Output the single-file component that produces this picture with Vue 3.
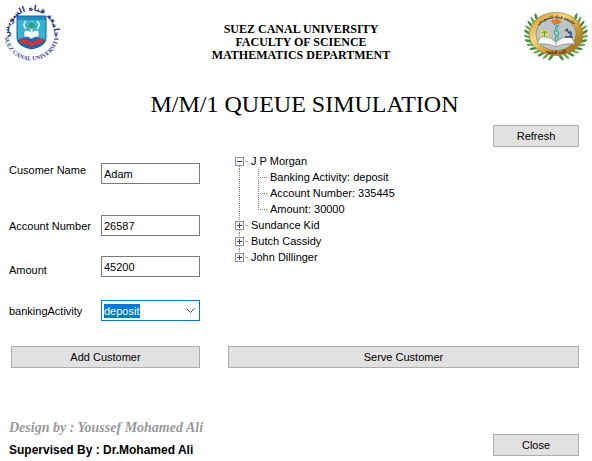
<script setup>
import { ref, reactive } from 'vue'

const form = reactive({ name: 'Adam', account: '26587', amount: '45200', activity: 'deposit' })

const customers = ref([
  { name: 'J P Morgan', activity: 'deposit', account: '335445', amount: '30000', open: true },
  { name: 'Sundance Kid', activity: 'deposit', account: '335446', amount: '12000', open: false },
  { name: 'Butch Cassidy', activity: 'withdraw', account: '335447', amount: '8000', open: false },
  { name: 'John Dillinger', activity: 'deposit', account: '335448', amount: '5000', open: false }
])

function details(c) {
  return ['Banking Activity: ' + c.activity, 'Account Number: ' + c.account, 'Amount: ' + c.amount]
}

function addCustomer() {
  customers.value.push({ ...form, open: false })
}

function serveCustomer() {
  customers.value.shift()
}

// Laurel leaves placed in pairs along both sides of the seal.
const leaves = []
for (let i = 0; i < 13; i++) {
  const deg = 80 - i * 10.5
  const a = (deg * Math.PI) / 180
  for (const side of [1, -1]) {
    const x = 36 + side * 28.5 * Math.cos(a)
    const y = 34 + 23.5 * Math.sin(a)
    leaves.push({ x, y, r: side === 1 ? deg - 28 : 208 - deg })
  }
}
</script>

<template>
  <main class="window">
    <header class="header">
      <svg class="logo-left" viewBox="0 0 64 64" role="img" aria-label="Suez Canal University logo">
        <defs>
          <path id="arc-top" d="M9.500 38 A22.500 22.500 0 1 1 53.500 38" />
          <path id="arc-bottom" d="M4 33 A27.500 27.500 0 0 0 59 33" />
          <clipPath id="shield"><path d="M17 16 H46 V38 Q46 46 31.500 49 Q17 46 17 38 Z" /></clipPath>
        </defs>
        <text class="arabic" direction="rtl"><textPath href="#arc-top" startOffset="50%" text-anchor="middle">جامعة قناة السويس</textPath></text>
        <text class="latin"><textPath href="#arc-bottom" startOffset="50%" text-anchor="middle">SUEZ CANAL UNIVERSITY</textPath></text>
        <g clip-path="url(#shield)">
          <rect x="17" y="16" width="29" height="34" fill="#36b4d6" />
          <rect x="17" y="16" width="29" height="4" fill="#1e8fc0" />
          <path d="M17 40 Q31 33 46 40 V50 H17Z" fill="#2468a5" />
          <path d="M20 38 L31.500 42 L43 38 V42 L31.500 46 L20 42Z" fill="#d5323a" />
        </g>
        <path d="M24 31 Q28 29 31.500 32 Q35 29 39 31 V37 Q35 36 31.500 39 Q28 36 24 37Z" fill="#f4fbfc" stroke="#4b7d95" stroke-width=".6" />
        <path d="M31.500 21 V38" stroke="#f4fbfc" stroke-width="2" />
        <path d="M26 29 Q22 25 26 21 M37 29 Q41 25 37 21" fill="none" stroke="#e9f7ee" stroke-width="1.500" />
        <path d="M28 26 Q30 23 31.500 21 Q33 23 35 26 L31.500 29Z" fill="#3d9b69" />
        <path d="M17 16 H46 V38 Q46 46 31.500 49 Q17 46 17 38 Z" fill="none" stroke="#1a5f96" stroke-width="1" />
      </svg>

      <p class="faculty">
        <span>SUEZ CANAL UNIVERSITY</span>
        <span>FACULTY OF SCIENCE</span>
        <span>MATHEMATICS DEPARTMENT</span>
      </p>

      <svg class="logo-right" viewBox="3 6 66 56" role="img" aria-label="Faculty of Science seal">
        <defs>
          <linearGradient id="gold" x1="0" y1="0" x2="1" y2="1">
            <stop offset="0" stop-color="#b98623" />
            <stop offset=".35" stop-color="#f4da86" />
            <stop offset=".65" stop-color="#c89431" />
            <stop offset="1" stop-color="#8e5f14" />
          </linearGradient>
          <path id="seal-top" d="M16 28 A22 17 0 0 1 56 28" />
          <path id="seal-bottom" d="M14 41 A23.500 20 0 0 0 58 41" />
        </defs>
        <ellipse
          v-for="(l, i) in leaves"
          :key="i"
          rx="4"
          ry="1.300"
          :fill="i % 4 < 2 ? '#3f8f3a' : '#69a957'"
          :transform="`translate(${l.x} ${l.y}) rotate(${l.r})`"
        />
        <ellipse cx="36" cy="34" rx="27" ry="21.500" fill="url(#gold)" stroke="#a87822" stroke-width=".7" />
        <ellipse cx="36" cy="34" rx="20" ry="16.500" fill="#bcc4c8" stroke="#83702f" stroke-width=".6" />
        <text class="seal-text"><textPath href="#seal-top" startOffset="50%" text-anchor="middle">جامعة قناة السويس</textPath></text>
        <text class="seal-text"><textPath href="#seal-bottom" startOffset="50%" text-anchor="middle">كلية العلوم</textPath></text>
        <path d="M20 30 H29 V42 H20Z" fill="#d8d66e" />
        <path d="M24.500 31 V38 M22 33 Q24.500 30 27 33" stroke="#5b9a47" stroke-width="1.200" fill="none" />
        <path d="M17 44 Q19 40 21 37 Q29 36 36 42 Q43 36 51 37 Q53 40 55 44 Q43 43 36 47 Q29 43 17 44Z" fill="#f7f7f4" stroke="#8b8b86" stroke-width=".7" />
        <path d="M36 42 V47" stroke="#777" stroke-width=".7" />
        <path d="M31 21 L33 19 L35 20 L37 18 L39 20 L42 21 L39 24 H33Z" fill="#e27a27" />
        <path d="M34 24 Q41 27 36 30 Q32 33 37 36 Q40 38 37 41 M39 25 Q33 27 37 31 Q41 34 36 37 Q34 39 36 41" fill="none" stroke="#38a99c" stroke-width="1.100" />
        <path d="M46 29 L50 34 M45 31 L48 29 M50 31 Q53 35 49 37 M45 37 H53" stroke="#364b78" stroke-width="1.400" fill="none" />
      </svg>
    </header>

    <h1 class="title">M/M/1 QUEUE SIMULATION</h1>

    <div class="body">
      <form class="fields" @submit.prevent>
        <div class="field">
          <label class="raised" for="name">Cusomer Name</label>
          <input id="name" v-model="form.name" type="text" />
        </div>
        <div class="field account">
          <label for="account">Account Number</label>
          <input id="account" v-model="form.account" type="text" />
        </div>
        <div class="field amount">
          <label class="lowered" for="amount">Amount</label>
          <input id="amount" v-model="form.amount" type="text" />
        </div>
        <div class="field activity">
          <label for="activity">bankingActivity</label>
          <span class="combo">
            <select id="activity" v-model="form.activity">
              <option>deposit</option>
              <option>withdraw</option>
            </select>
            <svg class="chevron" viewBox="0 0 9 6" aria-hidden="true">
              <path d="M.5 .5 L4.500 4.500 L8.500 .5" fill="none" stroke="#444" />
            </svg>
          </span>
        </div>
      </form>

      <section class="queue">
        <button class="small" type="button">Refresh</button>
        <ul class="tree">
          <li v-for="(c, i) in customers" :key="c.name">
            <div class="node">
              <button class="toggle" type="button" :aria-expanded="c.open" :aria-label="'Toggle ' + c.name" @click="c.open = !c.open">
                <svg width="23" height="16" shape-rendering="crispEdges">
                  <path v-if="i > 0" class="dots" d="M11.500 0 V4" />
                  <path v-if="i < customers.length - 1" class="dots" d="M11.500 13 V16" />
                  <path class="dots" d="M17 8.500 H21" />
                  <rect x="7.500" y="4.500" width="8" height="8" fill="#f6f6f6" stroke="#919191" />
                  <path d="M9 8.500 H14" stroke="#34499b" />
                  <path v-if="!c.open" d="M11.500 6 V11" stroke="#34499b" />
                </svg>
              </button>
              <span>{{ c.name }}</span>
            </div>
            <ul v-if="c.open" class="tree">
              <li v-for="(d, j) in details(c)" :key="d" class="node">
                <svg width="42" height="16" shape-rendering="crispEdges" aria-hidden="true">
                  <path v-if="i < customers.length - 1" class="dots" d="M11.500 0 V16" />
                  <path class="dots" :d="j < 2 ? 'M30.5 0 V16' : 'M30.5 0 V9'" />
                  <path class="dots" d="M30 8.500 H39" />
                </svg>
                <span>{{ d }}</span>
              </li>
            </ul>
          </li>
        </ul>
      </section>

      <button type="button" @click="addCustomer">Add Customer</button>
      <button type="button" @click="serveCustomer">Serve Customer</button>
    </div>

    <footer class="footer">
      <div class="credits">
        <p class="design">Design by : Youssef Mohamed Ali</p>
        <p class="supervisor">Supervised By : Dr.Mohamed Ali</p>
      </div>
      <button class="small" type="button">Close</button>
    </footer>
  </main>
</template>

<style>
body {
  background: #fff;
}
</style>

<style scoped>
.window {
  font-family: "Liberation Sans", Arial, sans-serif;
  font-size: 11px;
  line-height: 14px;
  color: #000;
}
.header {
  display: flex;
  justify-content: space-between;
  align-items: flex-start;
  height: 64px;
}
.logo-left {
  width: 64px;
  height: 64px;
}
.logo-right {
  width: 66px;
  height: 56px;
  margin: 6px 3px 0 0;
}
.arabic {
  font: bold 8px "DejaVu Sans", sans-serif;
  fill: #27357f;
}
.latin {
  font: bold 6px "Liberation Serif", serif;
  fill: #3a468d;
}
.seal-text {
  font: bold 4px "DejaVu Sans", sans-serif;
  fill: #3d2a08;
}
.faculty {
  display: flex;
  flex-direction: column;
  align-items: center;
  margin: 0;
  padding: 23px 0 0 15px;
  font: bold 12px/13px "Liberation Serif", serif;
}
.title {
  margin: 26px 0 7px;
  padding-left: 17px;
  text-align: center;
  font: normal 24px/28px "Liberation Serif", serif;
}
.body {
  display: grid;
  grid-template-columns: 189px 1fr;
  gap: 25px 28px;
  padding: 0 13px 0 11px;
}
.fields {
  padding-top: 38px;
}
.field {
  display: grid;
  grid-template-columns: 90px 1fr;
  align-items: center;
  height: 21px;
}
.field label {
  margin-left: -2px;
  white-space: nowrap;
}
.field .raised {
  align-self: start;
}
.field .lowered {
  align-self: end;
}
.account {
  margin-top: 31px;
}
.amount {
  margin-top: 20px;
}
.activity {
  margin-top: 23px;
}
input,
select {
  box-sizing: border-box;
  width: 100%;
  height: 21px;
  margin: 0;
  padding: 0 2px;
  border: 1px solid #7a7a7a;
  border-radius: 0;
  background: #fff;
  font: inherit;
  color: #000;
}
.combo {
  display: grid;
  align-items: center;
}
.combo > * {
  grid-area: 1 / 1;
}
select {
  appearance: none;
  border-color: #0078d7;
  outline: none;
  color: #fff;
  background: linear-gradient(#0078d7, #0078d7) 2px center / 36px 14px no-repeat #fff;
}
option {
  color: #000;
}
.chevron {
  justify-self: end;
  width: 9px;
  height: 6px;
  margin-right: 5px;
  pointer-events: none;
}
button {
  height: 22px;
  padding: 0;
  border: 1px solid #adadad;
  background: #e1e1e1;
  font: inherit;
  color: #000;
}
.small {
  width: 86px;
}
.queue {
  display: flex;
  flex-direction: column;
  align-items: flex-end;
  gap: 6px;
}
.tree {
  align-self: stretch;
  margin: 0;
  padding: 0;
  list-style: none;
}
.node {
  display: flex;
  align-items: center;
  height: 16px;
}
.toggle {
  height: 16px;
  border: 0;
  background: none;
}
.toggle svg,
.node svg {
  display: block;
}
.dots {
  fill: none;
  stroke: #808080;
  stroke-dasharray: 1 1;
}
.footer {
  display: flex;
  justify-content: space-between;
  align-items: flex-end;
  margin-top: 49px;
  padding: 0 13px 0 9px;
}
.credits p {
  margin: 0;
}
.credits .design {
  font: italic bold 14px/22px "Liberation Serif", serif;
  color: #999;
}
.credits .supervisor {
  font: bold 12px/22px "Liberation Sans", Arial, sans-serif;
}
.footer .small {
  margin-bottom: 5px;
}
</style>
